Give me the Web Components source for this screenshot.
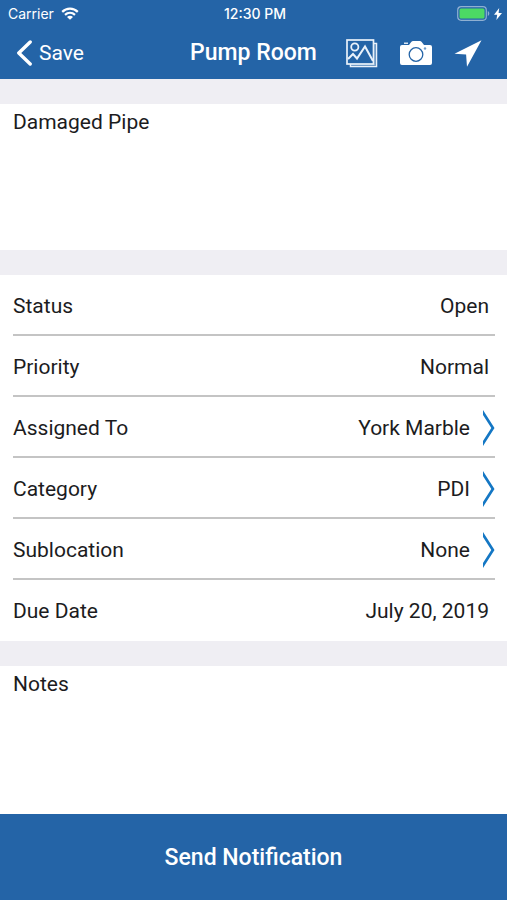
<!DOCTYPE html>
<html lang="en">
<head>
<meta charset="utf-8">
<meta name="viewport" content="width=device-width, initial-scale=1">
<title>Pump Room</title>
<style>
  html, body {
    height: 100%;
    margin: 0;
  }
  body {
    --brand: #2464a7;
    --accent: #1477c4;
    --gap: 25px;
    --line: #c4c4c4;
    background-color: #efeef3;
    color: #1c1c1e;
    font-family: Roboto, "Liberation Sans", sans-serif;
    font-size: 21px;
    line-height: 28px;
  }
</style>
</head>
<body>
<issue-screen>
  <status-bar slot="top" carrier="Carrier" time="12:30 PM"></status-bar>
  <nav-bar slot="top" back="Save">Pump Room</nav-bar>
  <text-block name="description" value="Damaged Pipe"></text-block>
  <field-list>
    <field-row label="Status">Open</field-row>
    <field-row label="Priority">Normal</field-row>
    <field-row label="Assigned To" more>York Marble</field-row>
    <field-row label="Category" more>PDI</field-row>
    <field-row label="Sublocation" more>None</field-row>
    <field-row label="Due Date">July 20, 2019</field-row>
  </field-list>
  <text-block name="notes" label="Notes" grow></text-block>
  <action-bar slot="bottom">Send Notification</action-bar>
</issue-screen>

<template id="issue-screen">
  <style>
    :host {
      display: flex;
      flex-direction: column;
      min-height: 100%;
    }
    header {
      background-color: var(--brand);
      color: white;
    }
    main {
      flex: 1;
      display: flex;
      flex-direction: column;
      gap: var(--gap);
      padding-top: var(--gap);
    }
  </style>
  <header><slot name="top"></slot></header>
  <main><slot></slot></main>
  <slot name="bottom"></slot>
</template>

<template id="status-bar">
  <style>
    :host {
      display: grid;
      grid-template-columns: 1fr auto 1fr;
      align-items: center;
      height: 27px;
      padding: 0 5px 0 8px;
      font-family: Inter, "Liberation Sans", sans-serif;
      font-size: 14px;
      line-height: 16px;
    }
    .left, .right {
      display: flex;
      align-items: center;
    }
    .left {
      gap: 7px;
    }
    .right {
      justify-content: flex-end;
      gap: 4px;
    }
    .time {
      font-weight: 500;
    }
    svg {
      display: block;
    }
  </style>
  <div class="left">
    <span class="carrier"></span>
    <svg width="18" height="13" viewBox="0 0 18 13" fill="none" stroke="white" stroke-width="2.2">
      <path d="M1.2 4.9C5.6.6 12.4.6 16.8 4.9"/>
      <path d="M4 7.9c2.900-2.700 7.100-2.700 10 0"/>
      <path d="M9 12.800 6 9.900c1.700-1.600 4.300-1.600 6 0z" fill="white" stroke="none"/>
    </svg>
  </div>
  <span class="time"></span>
  <div class="right">
    <svg width="33" height="15" viewBox="0 0 33 15">
      <rect x=".7" y=".7" width="28.6" height="13.6" rx="3.5" fill="none" stroke="#8fb0d2" stroke-width="1.2"/>
      <rect x="2.5" y="2.5" width="25" height="10" rx="1.5" fill="#4cd964"/>
      <path d="M30.800 5c2 .8 2 4.200 0 5z" fill="#8fb0d2"/>
    </svg>
    <svg width="8" height="12" viewBox="0 0 8 12" fill="white">
      <path d="M5.200 0 0 6.800h3.200L2.400 12 8 5H4.600z"/>
    </svg>
  </div>
</template>

<template id="nav-bar">
  <style>
    :host {
      display: grid;
      grid-template-columns: 1fr auto 1fr;
      align-items: center;
      height: 52px;
      padding: 0 16px;
    }
    button {
      display: flex;
      align-items: center;
      margin: 0;
      padding: 0;
      border: 0;
      background: none;
      color: inherit;
      font: inherit;
      cursor: pointer;
    }
    .back {
      gap: 7px;
    }
    h1 {
      margin: 0;
      font-size: 23px;
      font-weight: 500;
    }
    .tools {
      display: flex;
      align-items: center;
      justify-content: flex-end;
      gap: 22px;
      padding-right: 9px;
    }
    svg {
      display: block;
    }
  </style>
  <div>
    <button class="back" type="button">
      <svg width="16" height="26" viewBox="0 0 16 26" fill="none" stroke="white" stroke-width="3.4" stroke-linecap="round" stroke-linejoin="round">
        <path d="M14.200 2 2.800 13l11.400 11"/>
      </svg>
      <span></span>
    </button>
  </div>
  <h1><slot></slot></h1>
  <div class="tools">
    <button type="button" aria-label="Photos">
      <svg width="32" height="29" viewBox="0 0 32 29" fill="none" stroke="#e9f1fa">
        <path d="M28 4.500h2.500v23H4.500V25" stroke-width="1.500"/>
        <path d="M29 5v21H5" stroke="#8fb0d2" stroke-width="1"/>
        <rect x="1" y="1" width="26.5" height="24" stroke-width="1.7"/>
        <circle cx="8.8" cy="8" r="3.6" stroke-width="1.8"/>
        <path d="m2 20 5-5 4 4.500 8-12L27 22" stroke-width="2"/>
      </svg>
    </button>
    <button type="button" aria-label="Camera">
      <svg width="32" height="25" viewBox="0 0 32 25">
        <path d="M2 4h7l2.200-3Q12 0 13.200 0h6.600Q21 0 21.700 1L24 4h6q2 0 2 2v16q0 2-2 2H2q-2 0-2-2V6q0-2 2-2z" fill="white"/>
        <rect x="4" y="1.5" width="4" height="1.5" fill="#dce8f4"/>
        <circle cx="16" cy="13.5" r="6.8" fill="none" stroke="#2464a7" stroke-width="1.3"/>
        <circle cx="25" cy="7.5" r="1.2" fill="#6f9bc9"/>
      </svg>
    </button>
    <button type="button" aria-label="Location">
      <svg width="28" height="27" viewBox="0 0 28 27" fill="white">
        <path d="M27.500.3 13 26.800l-.9-12.200L.5 13.800z"/>
      </svg>
    </button>
  </div>
</template>

<template id="text-block">
  <style>
    :host {
      display: flex;
      flex-direction: column;
      box-sizing: border-box;
      min-height: 146px;
      padding: 4px 13px;
      background-color: white;
    }
    :host([grow]) {
      flex: 1;
    }
    label:empty {
      display: none;
    }
    textarea {
      flex: 1;
      width: 100%;
      margin: 0;
      padding: 0;
      border: 0;
      outline: 0;
      resize: none;
      background: none;
      color: inherit;
      font: inherit;
    }
  </style>
  <label for="text"></label>
  <textarea id="text"></textarea>
</template>

<template id="field-list">
  <style>
    :host {
      display: block;
      padding: 0 12px 0 13px;
      background-color: white;
    }
  </style>
  <slot></slot>
</template>

<template id="field-row">
  <style>
    :host {
      display: block;
      border-bottom: 2px solid var(--line);
    }
    :host(:last-of-type) {
      border-bottom-color: transparent;
    }
    button {
      display: flex;
      align-items: center;
      justify-content: space-between;
      width: 100%;
      height: 59px;
      margin: 0;
      padding: 3px 0 0;
      border: 0;
      background: none;
      color: inherit;
      font: inherit;
      cursor: pointer;
    }
    .value {
      display: flex;
      align-items: center;
      gap: 12px;
      padding-right: 6px;
    }
    :host([more]) .value {
      padding-right: 0;
    }
    svg {
      display: none;
      fill: var(--accent);
    }
    :host([more]) svg {
      display: block;
    }
  </style>
  <button type="button">
    <span class="label"></span>
    <span class="value">
      <slot></slot>
      <svg width="13" height="36" viewBox="0 0 13 36">
        <path d="M1 0 12.500 18 1 36v-5l8.300-13L1 5z"/>
      </svg>
    </span>
  </button>
</template>

<template id="action-bar">
  <style>
    :host {
      display: block;
    }
    button {
      display: block;
      width: 100%;
      height: 86px;
      padding: 2px 0 0;
      border: 0;
      background-color: var(--brand);
      color: white;
      font: inherit;
      font-size: 23px;
      font-weight: 500;
      cursor: pointer;
    }
  </style>
  <button type="button"><slot></slot></button>
</template>

<script>
  class TemplateElement extends HTMLElement {
    constructor() {
      super();
      const template = document.getElementById(this.localName);
      this.attachShadow({ mode: "open" });
      this.shadowRoot.appendChild(template.content.cloneNode(true));
    }
    find(selector) {
      return this.shadowRoot.querySelector(selector);
    }
  }

  customElements.define("issue-screen", class extends TemplateElement {});
  customElements.define("field-list", class extends TemplateElement {});
  customElements.define("action-bar", class extends TemplateElement {});

  customElements.define(
    "status-bar",
    class extends TemplateElement {
      connectedCallback() {
        this.find(".carrier").textContent = this.getAttribute("carrier");
        this.find(".time").textContent = this.getAttribute("time");
      }
    }
  );

  customElements.define(
    "nav-bar",
    class extends TemplateElement {
      connectedCallback() {
        this.find(".back span").textContent = this.getAttribute("back");
      }
    }
  );

  customElements.define(
    "text-block",
    class extends TemplateElement {
      connectedCallback() {
        const textarea = this.find("textarea");
        const label = this.getAttribute("label");
        textarea.name = this.getAttribute("name");
        textarea.value = this.getAttribute("value") || "";
        if (label) {
          this.find("label").textContent = label;
        } else {
          textarea.setAttribute("aria-label", "Description");
        }
      }
    }
  );

  customElements.define(
    "field-row",
    class extends TemplateElement {
      connectedCallback() {
        this.find(".label").textContent = this.getAttribute("label");
      }
    }
  );
</script>
</body>
</html>
